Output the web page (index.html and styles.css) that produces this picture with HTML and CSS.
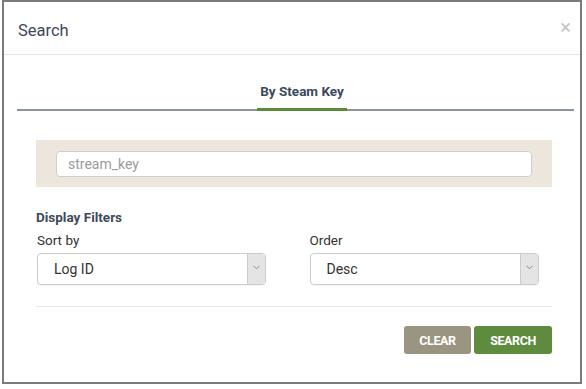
FILE: index.html
```html
<!DOCTYPE html>
<html lang="en">
  <head>
    <meta charset="UTF-8">
    <title>Search</title>
    <link rel="stylesheet" href="styles.css">
  </head>
  <body>
    <div class="modal">
      <div class="modal-header">
        <h4 class="modal-title">Search</h4>
        <span class="close">&times;</span>
      </div>
      <ul class="tabs">
        <li class="tab active">By Steam Key</li>
      </ul>
      <div class="modal-body">
        <div class="key-panel">
          <input type="text" class="key-input" placeholder="stream_key">
        </div>
        <h5 class="filters-title">Display Filters</h5>
        <div class="filters">
          <div class="filter">
            <label>Sort by</label>
            <div class="select">
              <span class="select-value">Log ID</span>
              <span class="select-arrow">
                <svg width="7" height="5" viewBox="0 0 7 5"><path d="M0.5 0.8 L3.5 3.8 L6.5 0.8" fill="none" stroke="#8a8a8a" stroke-width="1"/></svg>
              </span>
            </div>
          </div>
          <div class="filter">
            <label>Order</label>
            <div class="select">
              <span class="select-value">Desc</span>
              <span class="select-arrow">
                <svg width="7" height="5" viewBox="0 0 7 5"><path d="M0.5 0.8 L3.5 3.8 L6.5 0.8" fill="none" stroke="#8a8a8a" stroke-width="1"/></svg>
              </span>
            </div>
          </div>
        </div>
        <hr class="divider">
        <div class="actions">
          <button class="btn btn-clear">Clear</button>
          <button class="btn btn-search">Search</button>
        </div>
      </div>
    </div>
  </body>
</html>
```

FILE: styles.css
```css
/* Modal de busca */
body {
    margin: 0;
    font-family: Roboto, 'Liberation Sans', Arial, sans-serif;
    color: #333;
    background: #fff;
}

.modal {
    margin-left: 2px;
    width: 580px;
    height: 384px;
    box-sizing: border-box;
    border: 2px solid #7b7b7b;
    background: #fff;
}

.modal-header {
    display: flex;
    align-items: center;
    justify-content: space-between;
    box-sizing: border-box;
    height: 53px;
    padding: 5px 9px 0 14px;
    border-bottom: 1px solid #e5e5e5;
}

.modal-title {
    margin: 0;
    font-size: 16.5px;
    font-weight: 400;
    color: #3c4858;
}

.close {
    font-size: 20px;
    line-height: 1;
    color: #c4c4c4;
    margin-top: -8px;
}

/* Abas */
.tabs {
    list-style: none;
    display: flex;
    justify-content: center;
    margin: 18px 6px 0 13px;
    padding: 0 0 0 13px;
    border-bottom: 2px solid #8d939a;
}

.tab {
    padding: 8px 3px 7px;
    line-height: 20px;
    font-size: 13.5px;
    font-weight: 700;
    color: #3b4a5a;
    margin-bottom: -2px;
    border-bottom: 3px solid transparent;
}

.tab.active {
    border-bottom-color: #5b8a3a;
}

.modal-body {
    padding: 29px 28px 0 32px;
}

.key-panel {
    background: #ede6dc;
    padding: 11px 20px 10px;
}

.key-input {
    display: block;
    width: 100%;
    height: 26px;
    box-sizing: border-box;
    padding: 0 11px;
    border: 1px solid #cfcfcf;
    border-radius: 4px;
    font-family: inherit;
    font-size: 14px;
    color: #333;
    background: #fff;
}

.key-input::placeholder {
    color: #9b9b9b;
}

.filters-title {
    margin: 21px 0 5px;
    line-height: 18px;
    font-size: 13.5px;
    font-weight: 700;
    color: #3b4a5a;
}

.filters {
    display: grid;
    grid-template-columns: 1fr 1fr;
    gap: 30px;
    padding-left: 1px;
}

.filter label {
    display: block;
    line-height: 18px;
    font-size: 13.5px;
    margin-bottom: 4px;
    color: #333;
}

.select {
    display: flex;
    width: 229px;
    height: 32px;
    box-sizing: border-box;
    border: 1px solid #cccccc;
    border-radius: 4px;
    overflow: hidden;
    box-shadow: 0 1px 1px rgba(0, 0, 0, 0.05);
}

.select-value {
    flex: 1;
    display: flex;
    align-items: center;
    padding-left: 16px;
    font-size: 14px;
    color: #333;
}

.select-arrow {
    width: 18px;
    display: flex;
    align-items: flex-start;
    justify-content: center;
    padding-top: 11px;
    box-sizing: border-box;
    background: #e4e4e4;
    border-left: 1px solid #cccccc;
}

.divider {
    margin: 21px 0 0;
    border: 0;
    border-top: 1px solid #e6e6e6;
}

.actions {
    display: flex;
    justify-content: flex-end;
    gap: 3px;
    margin-top: 19px;
}

.btn {
    height: 28px;
    border: none;
    border-radius: 3px;
    font-family: inherit;
    font-size: 12.5px;
    font-weight: 700;
    text-transform: uppercase;
    letter-spacing: -0.4px;
    color: #fff;
    cursor: pointer;
}

.btn-clear {
    width: 67px;
    background: #9a9580;
}

.btn-search {
    width: 78px;
    background: #5e8b3d;
}
```
